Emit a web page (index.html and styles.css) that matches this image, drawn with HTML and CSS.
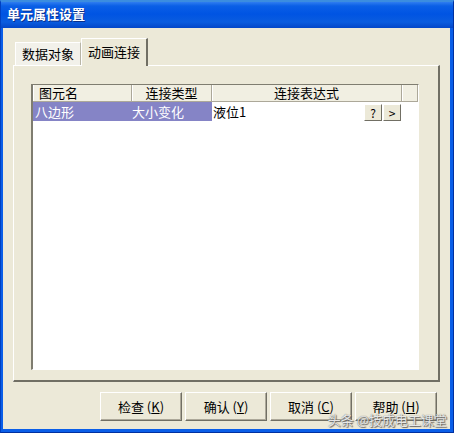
FILE: index.html
```html
<!DOCTYPE html>
<html lang="zh-CN">
  <head>
    <meta charset="UTF-8" />
    <title>单元属性设置</title>
    <link rel="stylesheet" href="styles.css">
  </head>
  <body>
    <div class="window">
      <div class="titlebar">单元属性设置</div>
      <div class="client">
        <div class="tabs">
          <div class="tab">数据对象</div>
          <div class="tab active">动画连接</div>
        </div>
        <div class="panel">
          <div class="list">
            <div class="head">
              <div class="th c1 left">图元名</div>
              <div class="th c2">连接类型</div>
              <div class="th c3">连接表达式</div>
              <div class="th c4"></div>
            </div>
            <div class="row">
              <div class="td c1 sel">八边形</div>
              <div class="td c2 sel">大小变化</div>
              <div class="td c3 expr">
                <span>液位1</span>
                <span class="mini">
                  <span class="minibtn">?</span><span class="minibtn">&gt;</span>
                </span>
              </div>
            </div>
          </div>
        </div>
        <div class="buttons">
          <div class="btn">检查 (<u>K</u>)</div>
          <div class="btn">确认 (<u>Y</u>)</div>
          <div class="btn">取消 (<u>C</u>)</div>
          <div class="btn">帮助 (<u>H</u>)</div>
        </div>
      </div>
      <div class="watermark">头条 @技成电工课堂</div>
    </div>
  </body>
</html>
```

FILE: styles.css
```css
:root {
  --face: #ece9d8;
  --shadow: #7f7d70;
  --font: "SimSun", "Noto Sans CJK SC", "Liberation Sans", sans-serif;
}
* { box-sizing: border-box; }
html, body {
  margin: 0;
  width: 454px;
  height: 433px;
  overflow: hidden;
  font-family: var(--font);
  font-size: 12px;
  color: #000;
  background: #3a8ea8;
}
.window {
  position: relative;
  width: 454px;
  height: 433px;
  display: flex;
  flex-direction: column;
  background: #0a5ee8;
  border-top: 2px solid #3b8de0;
  border-left: 1px solid #0040c0;
  border-right: 1px solid #0030a0;
  border-bottom: 1px solid #0030a0;
}
.titlebar {
  height: 26px;
  line-height: 24px;
  padding-left: 6px;
  color: #fff;
  font-weight: bold;
  font-size: 13px;
  text-shadow: 1px 1px 0 #0a2e8a;
  background: linear-gradient(180deg, #2f7df0 0, #0a5fe6 4px, #0054e3 12px, #0a5cdf 20px, #0346c8 26px);
}
.client {
  flex: 1;
  margin: 0 3px 3px 2px;
  background: var(--face);
  padding: 10px 10px 8px 10px;
  display: flex;
  flex-direction: column;
}
.tabs {
  display: flex;
  align-items: flex-end;
  height: 27px;
  padding-left: 2px;
}
.tab {
  height: 23px;
  line-height: 22px;
  padding: 0 6px;
  background: #f2f1ea;
  border: 1px solid #fff;
  border-right: 1px solid #b8b5a6;
  border-bottom: none;
  font-size: 13px;
}
.tab.active {
  height: 28px;
  line-height: 26px;
  background: var(--face);
  border-right: 2px solid #716f64;
  position: relative;
  z-index: 1;
  margin-bottom: -1px;
}
.panel {
  height: 317px;
  border: 1px solid #fff;
  border-right: 2px solid #716f64;
  border-bottom: 2px solid #716f64;
  padding: 18px 19px 10px 17px;
  display: flex;
}
.list {
  flex: 1;
  background: #fff;
  border-top: 1px solid var(--shadow);
  border-left: 2px solid var(--shadow);
  border-right: 1px solid #fff;
  border-bottom: 1px solid #fff;
}
.head, .row {
  display: flex;
}
.head {
  height: 17px;
  background: #f1efe2;
  border-bottom: 1px solid #aca899;
}
.th {
  line-height: 16px;
  text-align: center;
  font-size: 13px;
  border-right: 1px solid #aca899;
  box-shadow: inset 1px 0 0 #fff;
}
.th.left {
  text-align: left;
  padding-left: 6px;
}
.c1 { width: 99px; }
.c2 { width: 80px; }
.c3 { width: 190px; }
.c4 { flex: 1; }
.row {
  height: 19px;
}
.td {
  line-height: 19px;
  font-size: 13px;
}
.td.c1 { padding-left: 2px; }
.td.sel {
  background: #8584c6;
  color: #fff;
}
.expr {
  display: flex;
  justify-content: space-between;
  padding-left: 1px;
  padding-right: 1px;
}
.mini {
  display: flex;
  gap: 1px;
  padding-top: 2px;
}
.minibtn {
  width: 18px;
  height: 17px;
  line-height: 15px;
  text-align: center;
  background: var(--face);
  border: 1px solid;
  border-color: #fff #716f64 #716f64 #fff;
  font-size: 12px;
}
.buttons {
  display: flex;
  justify-content: flex-end;
  gap: 3px;
  margin-top: auto;
  padding-right: 3px;
}
.btn {
  width: 82px;
  height: 29px;
  line-height: 27px;
  text-align: center;
  font-size: 13px;
  background: var(--face);
  border: 1px solid;
  border-color: #fff #716f64 #716f64 #fff;
  box-shadow: inset -1px -1px 0 #aca899;
}
.btn u {
  text-decoration: underline;
}
.watermark {
  position: absolute;
  right: 6px;
  bottom: 3px;
  font-size: 13px;
  color: rgba(255, 255, 255, 0.85);
  text-shadow: 0 0 1px #555, 1px 1px 1px #666;
}
```
